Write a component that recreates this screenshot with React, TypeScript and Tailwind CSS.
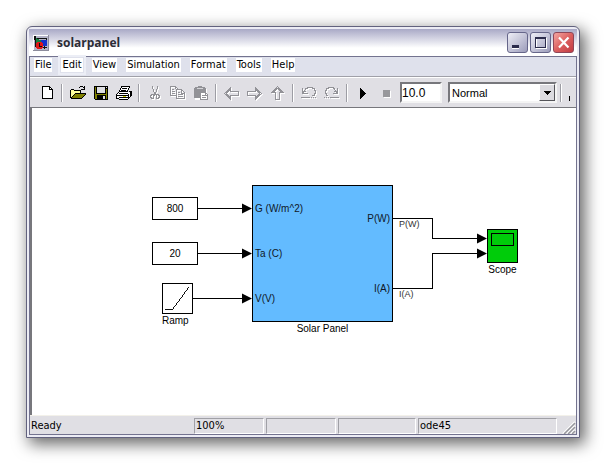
import type { ReactNode } from 'react';

const menuItems = ['File', 'Edit', 'View', 'Simulation', 'Format', 'Tools', 'Help'];

function Icon({ children }: { children: ReactNode }) {
  return (
    <svg viewBox="0 0 16 16" className="h-4 w-4 shrink-0" fill="none" shapeRendering="crispEdges" aria-hidden="true">
      {children}
    </svg>
  );
}

// Greyed icons get a white copy one pixel down and right
function Engraved({ d, solid }: { d: string; solid?: string }) {
  return (
    <Icon>
      <g transform="translate(1 1)">
        <path d={d} stroke="#fff" />
        {solid && <path d={solid} fill="#fff" />}
      </g>
      <path d={d} stroke="#929297" />
      {solid && <path d={solid} fill="#929297" />}
    </Icon>
  );
}

function ToolButton({ label, disabled, children }: { label: string; disabled?: boolean; children: ReactNode }) {
  return (
    <button type="button" aria-label={label} disabled={disabled} className="flex h-6 w-[23px] shrink-0 items-center pl-1">
      {children}
    </button>
  );
}

function Separator() {
  return (
    <div className="flex w-2 shrink-0 justify-center">
      <div className="h-[18px] w-0.5 border-l border-r border-l-[#9d9da4] border-r-white" />
    </div>
  );
}

function TitleBar() {
  return (
    <header className="flex h-7 items-center border-b border-[#73738f] bg-linear-to-b from-[#a9a9c6] to-white to-70% pr-[3px] pl-1">
      <svg viewBox="0 0 16 16" className="h-4 w-4" shapeRendering="crispEdges" aria-hidden="true">
        <rect x="0" y="0" width="16" height="16" fill="#8c8c9c" />
        <path d="M0 0h15v1H1v14H0z" fill="#fff" />
        <rect x="1" y="1" width="14" height="14" fill="#b4b4c8" />
        <path d="M1 1h2v2h11v4h-1V4H3v8H2V5H1z" fill="#111" />
        <path d="M3 3l7 3-7 5z" fill="#17803f" />
        <rect x="8" y="5" width="6" height="6" fill="#1531c8" />
        <path d="M4 7h5v1h1v5H9v1H4v-1H3V8h1z" fill="#e01818" />
        <path d="M6 8h1v3h2v1H6zM11 11h1v1h2v1h-2v1h-1v-1h-1v-1h1z" fill="#111" />
      </svg>
      <h1 className="ml-2 flex-1 font-['Open_Sans',sans-serif] text-[12px] leading-4 font-bold text-[#2c2c36]">
        solarpanel
      </h1>
      <div className="flex gap-0.5">
        <button type="button" aria-label="Minimize" className="h-[21px] w-[21px] rounded-[3px] border border-[#66668a] bg-linear-to-br from-[#eeeef6] via-[#c6c6d9] to-[#9c9cba]">
          <svg viewBox="0 0 19 19" className="h-full w-full" shapeRendering="crispEdges">
            <path d="M4 13h7v3H4z" fill="#fff" />
            <path d="M4 12h7v3H4z" fill="#2c2c4c" />
          </svg>
        </button>
        <button type="button" aria-label="Maximize" className="h-[21px] w-[21px] rounded-[3px] border border-[#66668a] bg-linear-to-br from-[#eeeef6] via-[#c6c6d9] to-[#9c9cba]">
          <svg viewBox="0 0 19 19" className="h-full w-full" fill="none" shapeRendering="crispEdges">
            <path d="M5.5 5.5h10v10h-10z" stroke="#fff" />
            <path d="M4.500 4.500h10v10h-10zM4 5.500h11" stroke="#2c2c4c" />
          </svg>
        </button>
        <button type="button" aria-label="Close" className="h-[21px] w-[21px] rounded-[3px] border border-[#8e4658] bg-linear-to-br from-[#f3a5a3] via-[#dc6060] to-[#c13a42]">
          <svg viewBox="0 0 19 19" className="h-full w-full" fill="none">
            <path d="M5 4.500l9.500 10M14.500 4.500L5 14.500" stroke="#fff" strokeWidth="2.200" />
          </svg>
        </button>
      </div>
    </header>
  );
}

function MenuBar() {
  return (
    <nav className="flex h-5 gap-[9px] border-b border-[#a0a0a8] bg-[#dfe1ec] px-1 pt-px">
      {menuItems.map((item) => (
        <button
          key={item}
          type="button"
          className={`h-3.5 bg-white px-px text-[11px] leading-3.5 ${item === 'Edit' ? 'outline-2 outline-offset-1 outline-[#eceef6]' : ''}`}
        >
          {item}
        </button>
      ))}
    </nav>
  );
}

function Toolbar() {
  return (
    <div className="flex h-[31px] items-center overflow-hidden border-t border-b border-t-white border-b-[#77777c] bg-[#e0dfe4] pl-[5px]">
      <ToolButton label="New">
        <Icon>
          <path d="M3.500 1.500h7l3 3v9h-10z" fill="#fff" stroke="#000" />
          <path d="M10.500 1.500v3h3" stroke="#000" />
        </Icon>
      </ToolButton>
      <Separator />
      <ToolButton label="Open">
        <Icon>
          <path d="M1 5h4v1h6v3H5l-4 5z" fill="#ffff9c" />
          <path d="M0 5h1v8H0zM1 4h3v1H1zM4 5h7v1H4zM10 6h1v2h-1zM1 12h1v1H1zM2 11h1v1H2zM3 10h1v1H3zM4 9h1v1H4zM5 8h11v1H5z" fill="#000" />
          <path d="M5 9h10l-4 4H1z" fill="#808000" />
          <path d="M1 13h11v1H1zM12 12h1v1h-1zM13 11h1v1h-1zM14 10h1v1h-1zM15 9h1v1h-1zM9 2h1v1H9zM10 1h3v1h-3zM13 2h1v1h-1zM14 1h1v4h-4V4h3z" fill="#000" />
        </Icon>
      </ToolButton>
      <ToolButton label="Save">
        <Icon>
          <path d="M1 1h14v14H2v-1H1z" fill="#000" />
          <path d="M2 2h1v7h10V4h1v10h-1v-4H4v4H2z" fill="#808000" />
          <path d="M4 2h8v6H4zM13 2h1v1h-1z" fill="#dedee2" />
          <path d="M10 11h2v3h-2z" fill="#dedee2" />
        </Icon>
      </ToolButton>
      <ToolButton label="Print">
        <Icon>
          <path d="M5.500 1.500h8l-2 5h-8zM3.500 6.500l-3 3v4h2l1 1h8l4-4v-4h-3" fill="#fff" stroke="#000" />
          <path d="M6 3.500h5M5 5.500h5M3 8.500h9M1 10.500h11M3 12.500h9M12.500 9v5M14.500 7v4" stroke="#000" />
          <path d="M7 11.500h3" stroke="#d8d800" />
        </Icon>
      </ToolButton>
      <Separator />
      <ToolButton label="Cut" disabled>
        <Engraved d="M5.500 1v3M6.500 4v3M10.500 1v3M9.500 4v3M7 7.500h2M7.500 8v3M8.500 8v2M4.500 9.500h2v4h-2v-1h-1v-2h1zM9.500 9.500h2v1h1v2h-1v1h-2z" />
      </ToolButton>
      <ToolButton label="Copy" disabled>
        <Engraved d="M6 10.500H.5v-9h5l2 2v1M5.500 2v2M2 4.500h2M2 6.500h3M2 8.500h3M6.500 4.500h5l3 3v6h-8zM11.500 5v3h3M8 7.500h2M8 9.500h5M8 11.500h5" />
      </ToolButton>
      <ToolButton label="Paste" disabled>
        <Icon>
          <path d="M6 2h4v1h3v1h1v11H2V4h1V3h3z" fill="#fff" />
          <path d="M5 1h4v1h3v1h1v10H1V3h1V2h3z" fill="#929297" />
          <path d="M4 3h6v1H4z" fill="#d4d4d8" />
          <path d="M7.500 7.500h5l2 2v5h-7z" fill="#fff" stroke="#929297" />
          <path d="M9 10.500h3M9 12.500h4M12.500 8v2h2" stroke="#929297" />
        </Icon>
      </ToolButton>
      <Separator />
      <ToolButton label="Back" disabled>
        <Engraved d="M.5 8.500l6-6v4h8v4h-8v4zM2 8.500l4-4M2 8.500l4 4" />
      </ToolButton>
      <ToolButton label="Forward" disabled>
        <Engraved d="M14.500 8.500l-6-6v4h-8v4h8v4zM13 8.500l-4-4M13 8.500l-4 4" />
      </ToolButton>
      <ToolButton label="Up to parent" disabled>
        <Engraved d="M7.500 1.500l6 6h-4v7h-4v-7h-4zM7.500 3l-4 4M7.500 3l4 4" />
      </ToolButton>
      <Separator />
      <ToolButton label="Undo" disabled>
        <Engraved d="M1.500 3v5h5M2 7.500l3-4h1v-1h5v1h2v2h1v3h-1v2h-2M3 6.500h2M0 12.500h9M10 12.500h1M12 12.500h1M14 12.500h1" />
      </ToolButton>
      <ToolButton label="Redo" disabled>
        <Engraved d="M13.500 3v5h-5M13 7.500l-3-4h-1v-1h-5v1h-2v2h-1v3h1v2h2M10 6.500h2M6 12.500h9M0 12.500h1M2 12.500h1M4 12.500h1" />
      </ToolButton>
      <Separator />
      <ToolButton label="Start simulation">
        <Icon>
          <path d="M5 3h1v1h1v1h1v1h1v1h1v1h1v1h-1v1H9v1H8v1H7v1H6v1H5z" fill="#000" />
        </Icon>
      </ToolButton>
      <ToolButton label="Stop" disabled>
        <Icon>
          <path d="M6 6h7v7H6z" fill="#fff" />
          <path d="M5 5h7v7H5z" fill="#98989c" />
        </Icon>
      </ToolButton>
      <input
        aria-label="Stop time"
        defaultValue="10.0"
        className="ml-[3px] h-[21px] w-[42px] shrink-0 border-2 border-t-[#77777c] border-r-[#f4f4f4] border-b-[#f4f4f4] border-l-[#77777c] bg-white font-['Liberation_Sans',sans-serif] text-[12px] leading-4 outline-none"
      />
      <div className="relative ml-1.5 h-[21px] w-[109px] shrink-0">
        <select
          aria-label="Simulation mode"
          className="block h-full w-full appearance-none border-2 border-t-[#77777c] border-r-[#f4f4f4] border-b-[#f4f4f4] border-l-[#77777c] bg-white pl-0.5 font-['Liberation_Sans',sans-serif] text-[11px] leading-4 outline-none"
        >
          <option>Normal</option>
          <option>Accelerator</option>
          <option>External</option>
        </select>
        <span className="pointer-events-none absolute top-0.5 right-0.5 flex h-[17px] w-4 items-center justify-center border border-t-white border-r-[#55555a] border-b-[#55555a] border-l-white bg-[#dcdbe0]">
          <svg viewBox="0 0 7 4" className="h-1 w-[7px]" shapeRendering="crispEdges" aria-hidden="true">
            <path d="M0 0h7v1H6v1H5v1H4v1H3V3H2V2H1V1H0z" fill="#000" />
          </svg>
        </span>
      </div>
      <Separator />
      <svg viewBox="0 0 5 16" className="h-4 w-[5px]" shapeRendering="crispEdges" aria-hidden="true">
        <path d="M4 11h1v5H4z" fill="#000" />
      </svg>
    </div>
  );
}

function Model() {
  return (
    <main className="relative flex-1 overflow-hidden border-l-2 border-[#77777c] bg-white font-['Liberation_Sans',sans-serif] text-[10px] leading-3">
      <svg width="544" height="307" className="absolute top-0 left-0" fill="none" stroke="#000" aria-hidden="true">
        <g shapeRendering="crispEdges">
          <path d="M166 100.500h50M166 145.500h50M161 190.500h55" />
          <path d="M361 110.500h39.500v20H447M361 180.500h39.500v-35H447" />
        </g>
        <path
          d="M210 95.500l10 5-10 5zM210 140.500l10 5-10 5zM210 185.500l10 5-10 5zM445 125.500l10 5-10 5zM445 140.500l10 5-10 5z"
          fill="#000"
          stroke="none"
        />
      </svg>

      <div className="absolute top-[89px] left-[120px] flex h-[23px] w-[46px] items-center justify-center border border-black">800</div>
      <div className="absolute top-[134px] left-[120px] flex h-[23px] w-[46px] items-center justify-center border border-black">20</div>

      <figure className="absolute top-[175px] left-[130px] flex w-[31px] flex-col">
        <svg viewBox="0 0 31 31" className="h-[31px] w-[31px] border border-black" fill="none" aria-hidden="true">
          <path d="M2 27.500h8L28 3" stroke="#000" shapeRendering="crispEdges" />
        </svg>
        <figcaption className="mt-px">Ramp</figcaption>
      </figure>

      <figure className="absolute top-[77px] left-[220px] w-[141px]">
        <div className="flex h-[137px] justify-between border border-black bg-[#63bbff] px-0.5 text-[#101828]">
          <div className="flex flex-col gap-[33px] pt-[17px]">
            <span>G (W/m^2)</span>
            <span>Ta (C)</span>
            <span>V(V)</span>
          </div>
          <div className="flex flex-col gap-[58px] pt-[27px] text-right">
            <span>P(W)</span>
            <span>I(A)</span>
          </div>
        </div>
        <figcaption className="mt-px text-center">Solar Panel</figcaption>
      </figure>

      <span className="absolute top-[110px] left-[367px] text-[9px] text-[#333]">P(W)</span>
      <span className="absolute top-[180px] left-[367px] text-[9px] text-[#333]">I(A)</span>

      <figure className="absolute top-[121px] left-[455px] flex w-[31px] flex-col items-center">
        <div className="h-[34px] w-[31px] border border-black bg-[#00cc0a] p-[3px]">
          <div className="h-[13px] border border-black" />
        </div>
        <figcaption className="mt-px">Scope</figcaption>
      </figure>
    </main>
  );
}

function StatusCell({ width, children }: { width: string; children?: ReactNode }) {
  return (
    <div className={`h-4 shrink-0 border border-t-[#a0a0a6] border-r-white border-b-white border-l-[#a0a0a6] pl-px ${width}`}>
      {children}
    </div>
  );
}

function StatusBar() {
  return (
    <footer className="flex h-[19px] items-end gap-0.5 border-t border-[#f3f1ea] bg-[#e0dfe4] text-[11px] leading-3.5">
      <div className="h-4 min-w-0 flex-1 pt-px pl-px">Ready</div>
      <StatusCell width="w-[70px]">100%</StatusCell>
      <StatusCell width="w-[70px]" />
      <StatusCell width="w-[78px]" />
      <StatusCell width="w-[139px]">ode45</StatusCell>
      <svg viewBox="0 0 17 16" className="h-4 w-[17px]" fill="none" aria-hidden="true">
        <path d="M4 16L16 4M8 16l8-8M12 16l4-4" stroke="#fff" strokeWidth="2" />
        <path d="M5 16L16 5M9 16l7-7M13 16l3-3" stroke="#96969c" strokeWidth="1.500" />
      </svg>
    </footer>
  );
}

export default function App() {
  return (
    <div className="flex h-screen bg-white p-[26px] font-['DejaVu_Sans_Condensed','DejaVu_Sans',sans-serif] text-black">
      <div className="flex min-w-0 flex-1 flex-col rounded-t-md border border-[#62627e] bg-[#ececf4] p-0.5 shadow-[4px_5px_16px_1px_rgba(0,0,0,0.6)]">
        <TitleBar />
        <div className="flex min-h-0 flex-1 flex-col border-x border-b border-[#73738f] bg-[#e0dfe4]">
          <MenuBar />
          <Toolbar />
          <Model />
          <StatusBar />
        </div>
      </div>
    </div>
  );
}
